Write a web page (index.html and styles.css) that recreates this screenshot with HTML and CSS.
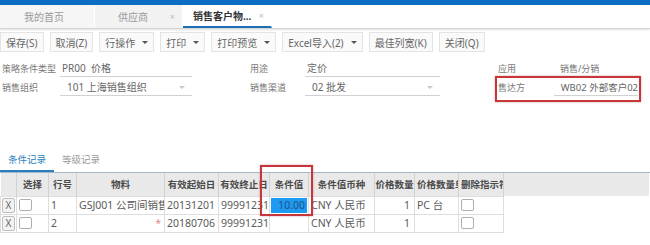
FILE: index.html
```html
<!DOCTYPE html>
<html lang="zh-CN">
<head>
  <meta charset="UTF-8">
  <title>销售客户物料价格</title>
  <link rel="stylesheet" href="styles.css">
</head>
<body>
  <div class="topbar"></div>

  <div class="tabbar">
    <div class="tab tab-home">我的首页</div>
    <div class="tab tab-vendor">供应商<span class="close">×</span></div>
    <div class="tab tab-active">销售客户物...<span class="close">×</span></div>
  </div>

  <div class="toolbar">
    <button class="btn">保存(S)</button>
    <button class="btn">取消(Z)</button>
    <button class="btn">行操作<i class="caret"></i></button>
    <button class="btn">打印<i class="caret"></i></button>
    <button class="btn">打印预览<i class="caret"></i></button>
    <button class="btn">Excel导入(2)<i class="caret"></i></button>
    <button class="btn">最佳列宽(K)</button>
    <button class="btn">关闭(Q)</button>
  </div>

  <div class="form">
    <div class="group g1">
      <div class="row"><span class="label">策略条件类型</span><span class="field">PR00&nbsp;&nbsp;价格</span></div>
      <div class="row"><span class="label">销售组织</span><span class="field select">101 上海销售组织</span></div>
    </div>
    <div class="group g2">
      <div class="row"><span class="label">用途</span><span class="field">定价</span></div>
      <div class="row"><span class="label">销售渠道</span><span class="field select">02 批发</span></div>
    </div>
    <div class="group g3">
      <div class="row"><span class="label">应用</span><span class="field plain">销售/分销</span></div>
      <div class="row"><span class="label">售达方</span><span class="field value-r">WB02 外部客户02</span></div>
      <div class="mark mark-form"></div>
    </div>
  </div>

  <div class="subtabs">
    <div class="subtab active">条件记录</div>
    <div class="subtab">等级记录</div>
  </div>

  <div class="grid">
    <table>
      <colgroup>
        <col class="w16"><col class="w32"><col class="w28"><col class="w88"><col class="w54"><col class="w51">
        <col class="w39"><col class="w66"><col class="w40"><col class="w44"><col class="w45"><col>
      </colgroup>
      <thead>
        <tr>
          <th></th><th>选择</th><th>行号</th><th>物料</th><th>有效起始日</th><th>有效终止日</th>
          <th>条件值</th><th>条件值币种</th><th>价格数量</th><th class="left">价格数量单位</th><th class="left">删除指示符</th><th class="fill"></th>
        </tr>
      </thead>
      <tbody>
        <tr>
          <td><span class="xbtn">X</span></td>
          <td><span class="check"></span></td>
          <td>1</td>
          <td>GSJ001 公司间销售物料</td>
          <td>20131201</td>
          <td>99991231</td>
          <td class="sel"><div class="sel-box">10.00</div></td>
          <td>CNY 人民币</td>
          <td class="num">1</td>
          <td>PC 台</td>
          <td><span class="check"></span></td>
          <td class="fill"></td>
        </tr>
        <tr>
          <td><span class="xbtn">X</span></td>
          <td><span class="check"></span></td>
          <td>2</td>
          <td class="req"><span class="star">*</span></td>
          <td>20180706</td>
          <td>99991231</td>
          <td></td>
          <td>CNY 人民币</td>
          <td class="num">1</td>
          <td></td>
          <td><span class="check"></span></td>
          <td class="fill"></td>
        </tr>
      </tbody>
    </table>
    <div class="mark mark-col"></div>
  </div>
</body>
</html>
```

FILE: styles.css
```css
* {
  margin: 0; padding: 0; box-sizing: border-box;
}
body {
  width: 650px;
  height: 245px;
  overflow: hidden;
  background: #fff;
  color: #666;
  font-family: "Noto Sans", "Noto Sans CJK SC", sans-serif;
  font-size: 10px;
}
.topbar {
  height: 5px;
  background: #0b6dc4;
}

/* page tabs */
.tabbar {
  display: flex;
  height: 24px;
  border-bottom: 1px solid #d4d4d4;
  box-shadow: 0 1px 2px rgba(0,0,0,0.12);
}
.tab {
  display: flex;
  align-items: center;
  height: 23px;
  background: #f2f2f2;
  border-right: 1px solid #fff;
  color: #999;
  font-size: 10px;
  line-height: 12px;
}
.tab-home {
  width: 95px;
  justify-content: center;
  padding-right: 6px;
  background: #f6f6f6;
}
.tab-vendor {
  width: 88px;
  padding-left: 23px;
}
.tab-active {
  width: 89px;
  padding-left: 10px;
  background: #fff;
  color: #333;
  font-weight: bold;
  border-bottom: 2px solid #1f6fb5;
}
.tab .close {
  margin-left: auto;
  margin-right: 7px;
  font-size: 9px;
  font-weight: normal;
  color: #bbb;
}

/* toolbar */
.toolbar {
  display: flex;
  gap: 6px;
  padding-top: 3px;
}
.btn {
  display: flex;
  align-items: center;
  height: 20px;
  padding: 0 5px;
  background: #fafafa;
  border: 1px solid #e4e4e4;
  color: #666;
  font-family: inherit;
  font-size: 10px;
}
.caret {
  display: inline-block;
  margin-left: 7px;
  border-left: 3px solid transparent;
  border-right: 3px solid transparent;
  border-top: 3px solid #555;
}

/* header form */
.form {
  display: flex;
  margin-top: 9px;
}
.group {
  position: relative;
  display: flex;
  flex-direction: column;
  gap: 3px;
}
.g1 { margin-left: 2px; width: 190px; }
.g2 { margin-left: 58px; width: 190px; }
.g2 .label { width: 55px; }
.g3 { margin-left: 58px; width: 140px; }
.g3 .label { width: 57px; }
.row {
  display: flex;
  height: 16px;
}
.label {
  width: 58px;
  font-size: 9px;
  line-height: 15px;
  color: #777;
}
.field {
  position: relative;
  flex: 1;
  padding-left: 2px;
  line-height: 15px;
  border-bottom: 1px solid #d2d2d2;
  color: #666;
  white-space: nowrap;
}
.field.plain {
  border-bottom: none;
  padding-left: 5px;
  font-size: 9px;
  color: #777;
}
.field.select {
  padding-left: 7px;
}
.field.select::after {
  content: "";
  position: absolute;
  right: 7px;
  top: 6px;
  border-left: 3px solid transparent;
  border-right: 3px solid transparent;
  border-top: 3px solid #c8c8c8;
}
.field.value-r {
  padding-left: 7px;
  font-size: 9.5px;
}

/* red highlight marks over the content */
.mark {
  position: absolute;
  border: 2px solid #c6363a;
  box-shadow: 0 0 2px rgba(120,0,0,0.35);
}
.mark-form {
  left: -3px;
  top: 15px;
  width: 146px;
  height: 26px;
}
.mark-col {
  left: 260px;
  top: -8px;
  width: 53px;
  height: 51px;
}

/* detail tabs */
.subtabs {
  display: flex;
  height: 24px;
  margin-top: 53px;
  border-bottom: 1px solid #a3b9ca;
}
.subtab {
  padding: 0 8px;
  line-height: 21px;
  font-size: 9.5px;
  color: #999;
}
.subtab.active {
  color: #2b7fc1;
  border-bottom: 2px solid #2b7fc1;
}

/* grid */
.grid {
  position: relative;
}
table {
  width: 100%;
  table-layout: fixed;
  border-collapse: collapse;
}
.w16 { width: 16px; }
.w32 { width: 32px; }
.w28 { width: 28px; }
.w88 { width: 88px; }
.w54 { width: 54px; }
.w51 { width: 51px; }
.w39 { width: 39px; }
.w66 { width: 66px; }
.w40 { width: 40px; }
.w44 { width: 44px; }
.w45 { width: 45px; }
th {
  height: 23px;
  padding: 0;
  background: #e9e9e9;
  border-right: 1px solid #d2d2d2;
  color: #4a4a4a;
  font-size: 9.5px;
  font-weight: bold;
  white-space: nowrap;
  overflow: hidden;
}
th.left {
  text-align: left;
  padding-left: 2px;
}
td {
  height: 18px;
  padding: 0 2px;
  border: 1px solid #dedede;
  color: #5a5a5a;
  font-size: 10.5px;
  line-height: 16px;
  white-space: nowrap;
  overflow: hidden;
}
th.fill {
  border-right: none;
}
td.fill {
  border: none;
}
td.num {
  text-align: right;
  padding-right: 4px;
}
td.req {
  text-align: right;
  vertical-align: top;
  padding-right: 3px;
}
.star {
  color: #e58a8a;
  font-size: 10px;
  line-height: 10px;
}
.xbtn {
  display: block;
  width: 13px;
  height: 15px;
  border: 1px solid #bdbdbd;
  border-radius: 2px;
  background: #f3f3f3;
  color: #666;
  font-size: 10px;
  line-height: 13px;
  text-align: center;
}
td:first-child {
  padding: 0 0 0 1px;
}
.check {
  display: block;
  width: 13px;
  height: 12px;
  border: 1px solid #aeaeae;
  border-radius: 2px;
  background: #fff;
}
td.sel {
  padding: 0 1px;
}
.sel-box {
  height: 15px;
  padding-right: 2px;
  background: #1d9bf0;
  color: #27508a;
  text-align: right;
  line-height: 15px;
}
```
